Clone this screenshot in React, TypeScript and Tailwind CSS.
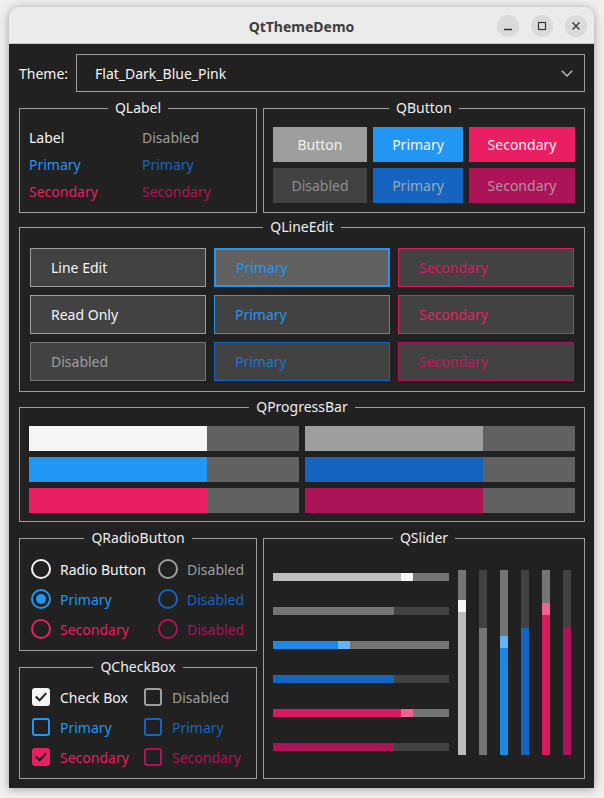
import React from 'react';

type GroupProps = { title: string; className?: string; children: React.ReactNode };

// Qt-style group box: a fieldset whose legend sits centred on the top border
const GroupBox = ({ title, className = '', children }: GroupProps) => (
  <fieldset className={`border border-[#9e9e9e] ${className}`}>
    <legend className="mx-auto px-[7px] text-[14px] leading-[16px] text-[#eeeeee]">{title}</legend>
    {children}
  </fieldset>
);

const labels = [
  ['Label', 'text-[#f5f5f5]', 'Disabled', 'text-[#9e9e9e]'],
  ['Primary', 'text-[#2196f3]', 'Primary', 'text-[#1565c0]'],
  ['Secondary', 'text-[#e91e63]', 'Secondary', 'text-[#ad1457]'],
];

const buttons = [
  { text: 'Button', cls: 'bg-[#9e9e9e] text-[#f0f0f0]' },
  { text: 'Primary', cls: 'bg-[#2196f3] text-[#f5f5f5]' },
  { text: 'Secondary', cls: 'bg-[#e91e63] text-[#f5f5f5]' },
  { text: 'Disabled', cls: 'bg-[#424242] text-[#8e8e8e]' },
  { text: 'Primary', cls: 'bg-[#1565c0] text-[#9aa8bc]' },
  { text: 'Secondary', cls: 'bg-[#ad1457] text-[#b590a2]' },
];

const edits = [
  { text: 'Line Edit', cls: 'bg-[#424242] border border-[#9e9e9e] text-[#f5f5f5]' },
  { text: 'Primary', cls: 'bg-[#616161] border-2 border-[#2196f3] text-[#2196f3] pl-[19px]' },
  { text: 'Secondary', cls: 'bg-[#424242] border border-[#d81b60] text-[#d81b60]' },
  { text: 'Read Only', cls: 'bg-[#424242] border border-[#9e9e9e] text-[#f5f5f5]' },
  { text: 'Primary', cls: 'bg-[#424242] border border-[#2196f3] text-[#2196f3]' },
  { text: 'Secondary', cls: 'bg-[#424242] border border-[#e91e63] text-[#e91e63]' },
  { text: 'Disabled', cls: 'bg-[#424242] border border-[#757575] text-[#9e9e9e]' },
  { text: 'Primary', cls: 'bg-[#424242] border border-[#1565c0] text-[#1976d2]' },
  { text: 'Secondary', cls: 'bg-[#424242] border border-[#ad1457] text-[#c2185b]' },
];

const progress = ['bg-[#f5f5f5]', 'bg-[#9e9e9e]', 'bg-[#2196f3]', 'bg-[#1565c0]', 'bg-[#e91e63]', 'bg-[#ad1457]'];

const radios = [
  { text: 'Radio Button', ring: 'border-[#f5f5f5]', txt: 'text-[#f5f5f5]', on: false },
  { text: 'Disabled', ring: 'border-[#9e9e9e]', txt: 'text-[#9e9e9e]', on: false },
  { text: 'Primary', ring: 'border-[#2196f3]', txt: 'text-[#2196f3]', on: true },
  { text: 'Disabled', ring: 'border-[#1565c0]', txt: 'text-[#1565c0]', on: false },
  { text: 'Secondary', ring: 'border-[#e91e63]', txt: 'text-[#e91e63]', on: false },
  { text: 'Disabled', ring: 'border-[#ad1457]', txt: 'text-[#ad1457]', on: false },
];

const checks = [
  { text: 'Check Box', box: 'border-[#f5f5f5] bg-[#f5f5f5]', txt: 'text-[#f5f5f5]', on: true },
  { text: 'Disabled', box: 'border-[#9e9e9e]', txt: 'text-[#9e9e9e]', on: false },
  { text: 'Primary', box: 'border-[#2196f3]', txt: 'text-[#2196f3]', on: false },
  { text: 'Primary', box: 'border-[#1565c0]', txt: 'text-[#1565c0]', on: false },
  { text: 'Secondary', box: 'border-[#e91e63] bg-[#e91e63]', txt: 'text-[#e91e63]', on: true },
  { text: 'Secondary', box: 'border-[#ad1457]', txt: 'text-[#ad1457]', on: false },
];

// fill / handle sizes in px, groove takes the rest
const hSliders = [
  { fill: 128, handle: true, f: 'bg-[#bdbdbd]', h: 'bg-[#f5f5f5]', g: 'bg-[#757575]' },
  { fill: 121, handle: false, f: 'bg-[#757575]', h: '', g: 'bg-[#424242]' },
  { fill: 65, handle: true, f: 'bg-[#1e88e5]', h: 'bg-[#64b5f6]', g: 'bg-[#757575]' },
  { fill: 121, handle: false, f: 'bg-[#1565c0]', h: '', g: 'bg-[#424242]' },
  { fill: 128, handle: true, f: 'bg-[#d81b60]', h: 'bg-[#f06292]', g: 'bg-[#757575]' },
  { fill: 121, handle: false, f: 'bg-[#ad1457]', h: '', g: 'bg-[#424242]' },
];

const vSliders = [
  { top: 30, handle: true, f: 'bg-[#bdbdbd]', h: 'bg-[#f5f5f5]', g: 'bg-[#757575]' },
  { top: 58, handle: false, f: 'bg-[#757575]', h: '', g: 'bg-[#424242]' },
  { top: 66, handle: true, f: 'bg-[#1e88e5]', h: 'bg-[#64b5f6]', g: 'bg-[#757575]' },
  { top: 58, handle: false, f: 'bg-[#1565c0]', h: '', g: 'bg-[#424242]' },
  { top: 33, handle: true, f: 'bg-[#d81b60]', h: 'bg-[#f06292]', g: 'bg-[#757575]' },
  { top: 58, handle: false, f: 'bg-[#ad1457]', h: '', g: 'bg-[#424242]' },
];

const CheckMark = () => (
  <svg width="14" height="14" viewBox="0 0 14 14" fill="none">
    <path d="M2.5 7.2 L5.6 10.2 L11.6 3.8" stroke="#212121" strokeWidth="2" strokeLinecap="square" />
  </svg>
);

const App = () => {
  return (
    <div className="w-[604px] h-[798px] bg-[#efefef] pt-[7px] pl-[9px] font-['Noto_Sans',sans-serif] text-[14px]">
      <div className="w-[585px] h-[781px] rounded-t-[11px] overflow-hidden shadow-[0_1px_9px_rgba(0,0,0,0.35)] flex flex-col">
        {/* title bar */}
        <div className="h-[37px] shrink-0 bg-[#ebebeb] border-b border-[#c9c9c9] grid grid-cols-[1fr_auto_1fr] items-center">
          <div />
          <span className="text-[14px] font-bold text-[#3d3d3d] pt-[3px]">QtThemeDemo</span>
          <div className="flex justify-end gap-[12px] pr-[7px] pt-[1px]">
            <div className="w-[22px] h-[22px] rounded-full bg-[#dadada] flex items-center justify-center">
              <svg width="10" height="10" viewBox="0 0 10 10">
                <path d="M1 8.5 H9" stroke="#333" strokeWidth="1.3" />
              </svg>
            </div>
            <div className="w-[22px] h-[22px] rounded-full bg-[#dadada] flex items-center justify-center">
              <svg width="10" height="10" viewBox="0 0 10 10">
                <rect x="1.5" y="1.5" width="7" height="7" fill="none" stroke="#333" strokeWidth="1.2" />
              </svg>
            </div>
            <div className="w-[22px] h-[22px] rounded-full bg-[#dadada] flex items-center justify-center">
              <svg width="10" height="10" viewBox="0 0 10 10">
                <path d="M1.5 1.5 L8.5 8.5 M8.5 1.5 L1.5 8.5" stroke="#333" strokeWidth="1.3" />
              </svg>
            </div>
          </div>
        </div>

        <div className="flex-1 bg-[#212121] pl-[10px] pr-[9px] pt-[10px] flex flex-col">
          {/* theme selector */}
          <div className="flex items-center h-[38px] shrink-0">
            <span className="w-[57px] text-[#f5f5f5]">Theme:</span>
            <div className="flex-1 h-full border border-[#9e9e9e] flex items-center justify-between pl-[18px] pr-[11px]">
              <span className="text-[#f5f5f5]">Flat_Dark_Blue_Pink</span>
              <svg width="12" height="7" viewBox="0 0 12 7" fill="none">
                <path d="M0.8 0.8 L6 6 L11.2 0.8" stroke="#bdbdbd" strokeWidth="1.4" />
              </svg>
            </div>
          </div>

          <div className="flex gap-[6px] mt-[8px]">
            <GroupBox title="QLabel" className="w-[238px] h-[113px]">
              <div className="grid grid-cols-[113px_1fr] pl-[9px] pt-[8px]">
                {labels.map((row, i) => (
                  <React.Fragment key={i}>
                    <div className={`h-[27px] flex items-center ${row[1]}`}>{row[0]}</div>
                    <div className={`h-[27px] flex items-center ${row[3]}`}>{row[2]}</div>
                  </React.Fragment>
                ))}
              </div>
            </GroupBox>
            <GroupBox title="QButton" className="flex-1 h-[113px]">
              <div className="grid grid-cols-[94px_90px_106px] gap-[6px] pl-[9px] pt-[11px]">
                {buttons.map((b, i) => (
                  <div key={i} className={`h-[35px] flex items-center justify-center ${b.cls}`}>
                    {b.text}
                  </div>
                ))}
              </div>
            </GroupBox>
          </div>

          <GroupBox title="QLineEdit" className="h-[173px] mt-[6px]">
            <div className="grid grid-cols-3 gap-x-[8px] gap-y-[8px] px-[10px] pt-[13px]">
              {edits.map((e, i) => (
                <div key={i} className={`h-[39px] flex items-center pl-[20px] ${e.cls}`}>
                  {e.text}
                </div>
              ))}
            </div>
          </GroupBox>

          <GroupBox title="QProgressBar" className="h-[123px] mt-[7px]">
            <div className="grid grid-cols-2 gap-[6px] px-[9px] pt-[11px]">
              {progress.map((c, i) => (
                <div key={i} className="h-[25px] flex bg-[#616161]">
                  <div className={`w-[178px] h-full ${c}`} />
                </div>
              ))}
            </div>
          </GroupBox>

          <div className="flex gap-[6px] mt-[8px] h-[249px]">
            <div className="w-[238px] flex flex-col">
              <GroupBox title="QRadioButton" className="h-[121px]">
                <div className="grid grid-cols-[127px_1fr] pl-[11px] pt-[8px]">
                  {radios.map((r, i) => (
                    <div key={i} className="h-[30px] flex items-center gap-[9px]">
                      <div className={`w-[20px] h-[20px] rounded-full border-2 flex items-center justify-center ${r.ring}`}>
                        {r.on && <div className="w-[10px] h-[10px] rounded-full bg-[#2196f3]" />}
                      </div>
                      <span className={r.txt}>{r.text}</span>
                    </div>
                  ))}
                </div>
              </GroupBox>
              <GroupBox title="QCheckBox" className="h-[120px] mt-[8px]">
                <div className="grid grid-cols-[112px_1fr] pl-[12px] pt-[7px]">
                  {checks.map((c, i) => (
                    <div key={i} className="h-[30px] flex items-center gap-[10px]">
                      <div className={`w-[18px] h-[18px] rounded-[3px] border-2 flex items-center justify-center ${c.box}`}>
                        {c.on && <CheckMark />}
                      </div>
                      <span className={c.txt}>{c.text}</span>
                    </div>
                  ))}
                </div>
              </GroupBox>
            </div>

            <GroupBox title="QSlider" className="flex-1 h-full">
              <div className="flex gap-[9px] pl-[9px] pt-[24px]">
                <div className="w-[176px] flex flex-col gap-[26px] mt-[3px]">
                  {hSliders.map((s, i) => (
                    <div key={i} className={`h-[8px] flex ${s.g}`}>
                      <div className={`h-full ${s.f}`} style={{ width: s.fill }} />
                      {s.handle && <div className={`w-[12px] h-full ${s.h}`} />}
                    </div>
                  ))}
                </div>
                <div className="flex gap-[13px] h-[185px]">
                  {vSliders.map((s, i) => (
                    <div key={i} className={`w-[8px] h-full flex flex-col ${s.f}`}>
                      <div className={`w-full ${s.g}`} style={{ height: s.top }} />
                      {s.handle && <div className={`w-full h-[12px] ${s.h}`} />}
                    </div>
                  ))}
                </div>
              </div>
            </GroupBox>
          </div>
        </div>
      </div>
    </div>
  );
};

export default App;
